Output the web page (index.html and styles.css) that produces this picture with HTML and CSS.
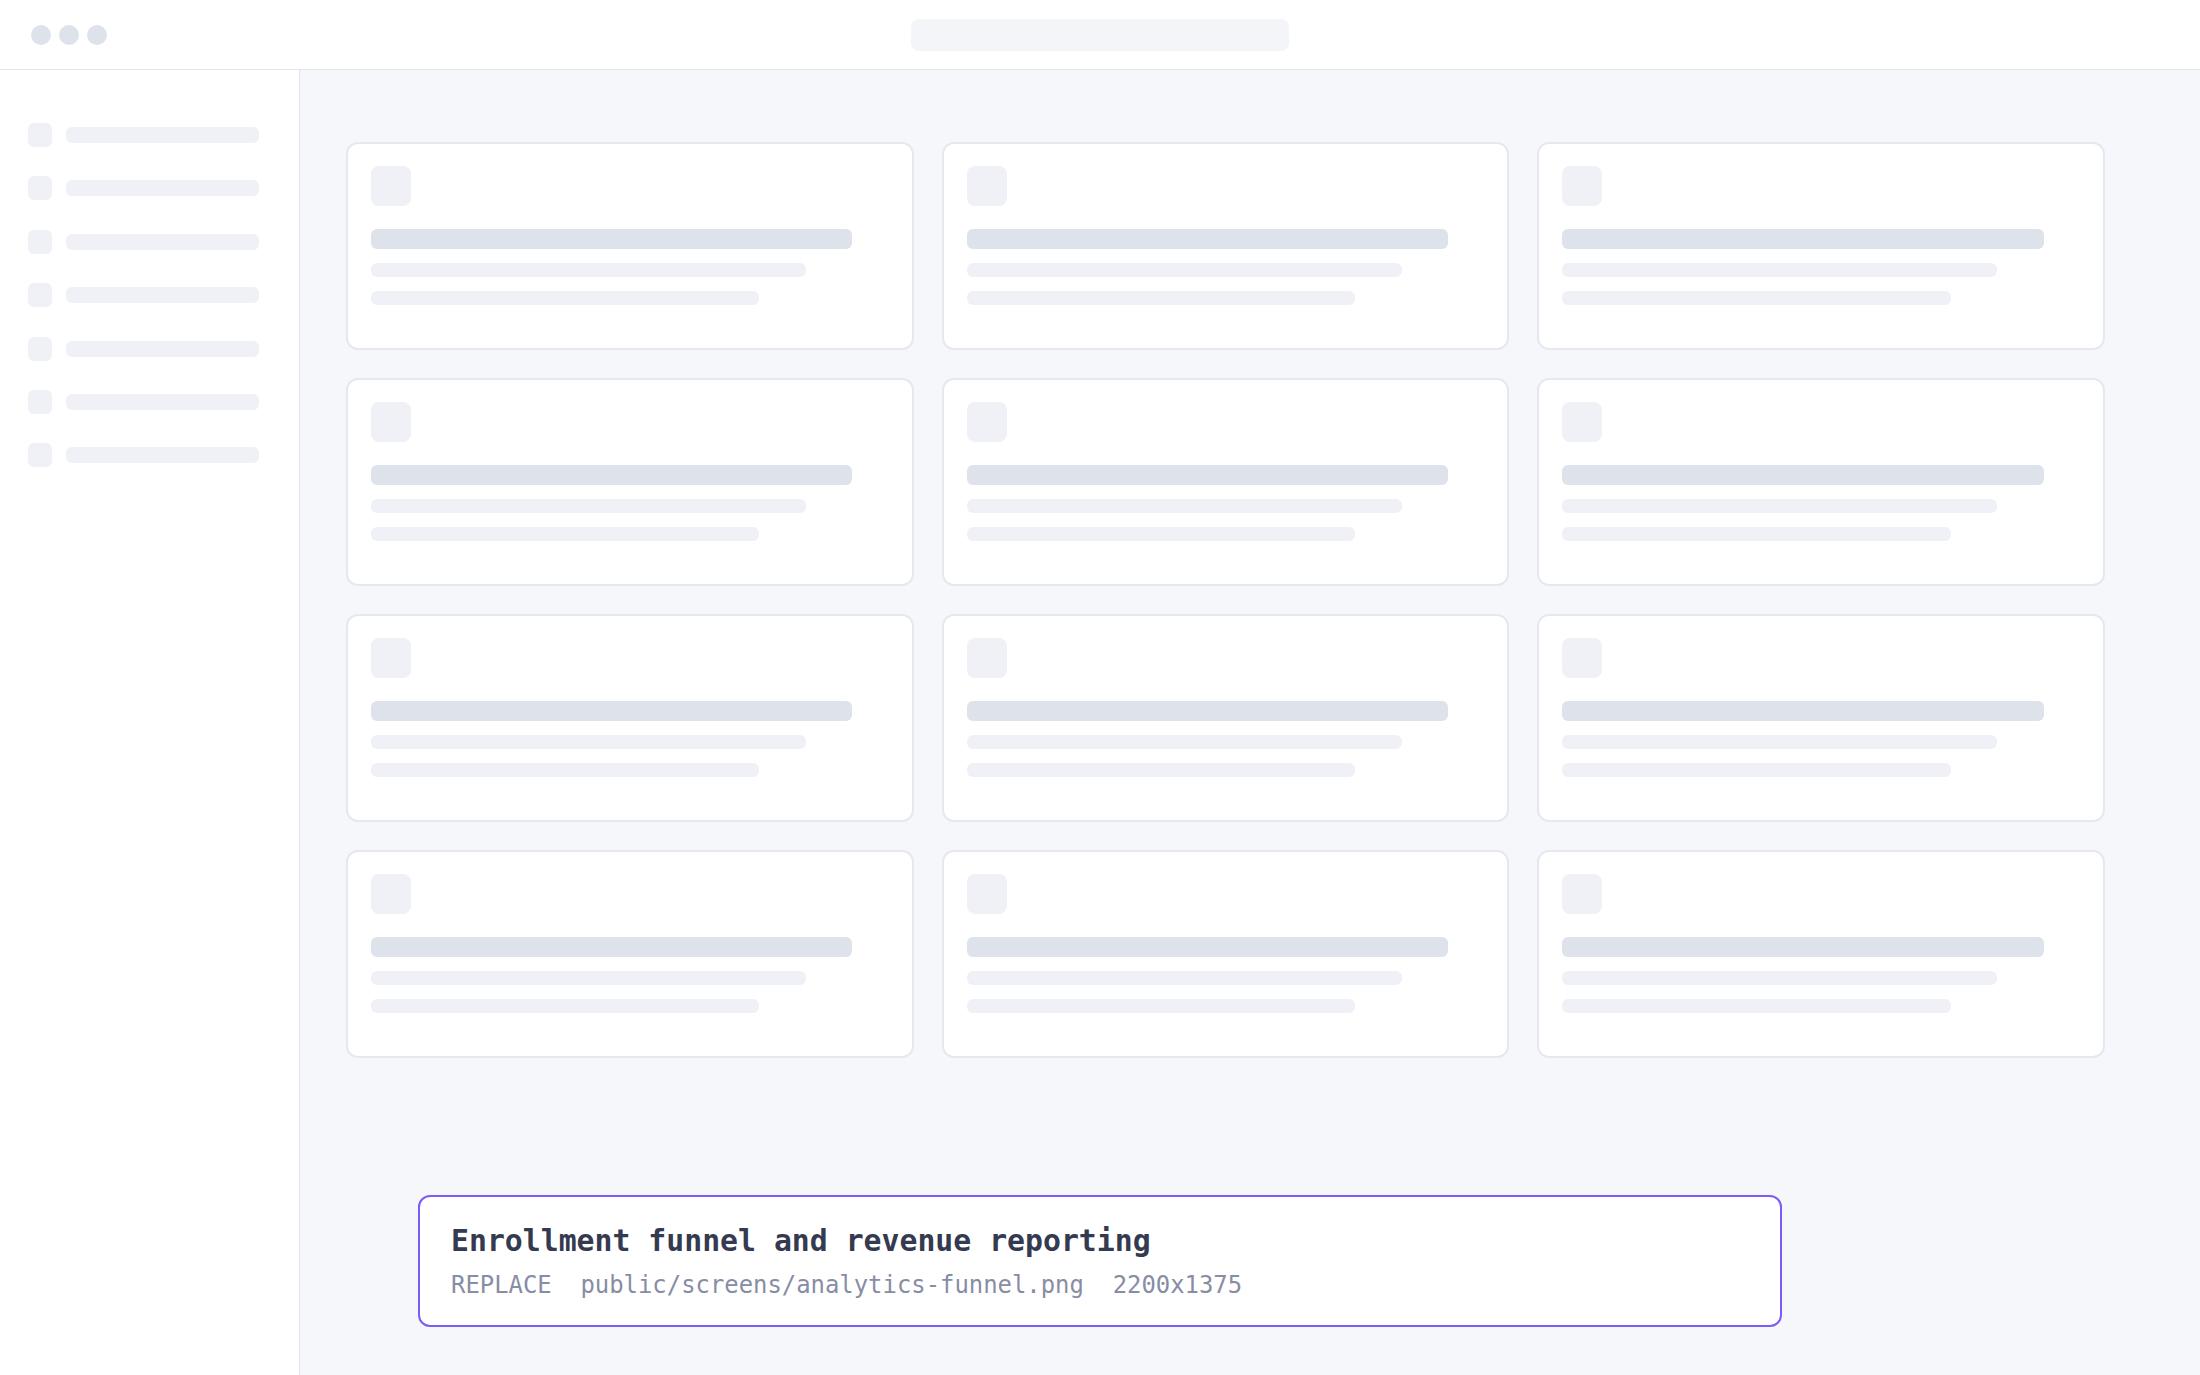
FILE: index.html
```html
<!DOCTYPE html>
<html lang="en">
<head>
    <meta charset="UTF-8">
    <meta name="viewport" content="width=device-width, initial-scale=1.0">
    <title>Enrollment funnel and revenue reporting</title>
    <link rel="stylesheet" href="styles.css">
</head>
<body>
    <div class="topbar">
        <div class="dots">
            <span class="dot"></span>
            <span class="dot"></span>
            <span class="dot"></span>
        </div>
        <div class="urlbar"></div>
        <div></div>
    </div>
    <div class="layout">
        <div class="sidebar">
            <div class="nav-item"><span class="nav-icon"></span><span class="nav-line"></span></div>
            <div class="nav-item"><span class="nav-icon"></span><span class="nav-line"></span></div>
            <div class="nav-item"><span class="nav-icon"></span><span class="nav-line"></span></div>
            <div class="nav-item"><span class="nav-icon"></span><span class="nav-line"></span></div>
            <div class="nav-item"><span class="nav-icon"></span><span class="nav-line"></span></div>
            <div class="nav-item"><span class="nav-icon"></span><span class="nav-line"></span></div>
            <div class="nav-item"><span class="nav-icon"></span><span class="nav-line"></span></div>
        </div>
        <div class="main">
            <div class="grid">
                <div class="card"><div class="card-icon"></div><div class="bar title"></div><div class="bar line1"></div><div class="bar line2"></div></div>
                <div class="card"><div class="card-icon"></div><div class="bar title"></div><div class="bar line1"></div><div class="bar line2"></div></div>
                <div class="card"><div class="card-icon"></div><div class="bar title"></div><div class="bar line1"></div><div class="bar line2"></div></div>
                <div class="card"><div class="card-icon"></div><div class="bar title"></div><div class="bar line1"></div><div class="bar line2"></div></div>
                <div class="card"><div class="card-icon"></div><div class="bar title"></div><div class="bar line1"></div><div class="bar line2"></div></div>
                <div class="card"><div class="card-icon"></div><div class="bar title"></div><div class="bar line1"></div><div class="bar line2"></div></div>
                <div class="card"><div class="card-icon"></div><div class="bar title"></div><div class="bar line1"></div><div class="bar line2"></div></div>
                <div class="card"><div class="card-icon"></div><div class="bar title"></div><div class="bar line1"></div><div class="bar line2"></div></div>
                <div class="card"><div class="card-icon"></div><div class="bar title"></div><div class="bar line1"></div><div class="bar line2"></div></div>
                <div class="card"><div class="card-icon"></div><div class="bar title"></div><div class="bar line1"></div><div class="bar line2"></div></div>
                <div class="card"><div class="card-icon"></div><div class="bar title"></div><div class="bar line1"></div><div class="bar line2"></div></div>
                <div class="card"><div class="card-icon"></div><div class="bar title"></div><div class="bar line1"></div><div class="bar line2"></div></div>
            </div>
        </div>
    </div>

    <div class="caption">
        <h1 class="caption-title">Enrollment funnel and revenue reporting</h1>
        <p class="caption-meta">
            <span>REPLACE</span>
            <span>public/screens/analytics-funnel.png</span>
            <span>2200x1375</span>
        </p>
    </div>
</body>
</html>
```

FILE: styles.css
```css
*{
    margin: 0;
    padding: 0;
    box-sizing: border-box;
}
body{
    font-family: "DejaVu Sans Mono", "Liberation Mono", monospace;
    background: #f6f7fb;
    width: 2200px;
    height: 1375px;
    overflow: hidden;
}
.topbar{
    height: 70px;
    background: #fff;
    border-bottom: 1px solid #e1e4ec;
    display: grid;
    grid-template-columns: 1fr auto 1fr;
    align-items: center;
}
.dots{
    display: flex;
    gap: 8px;
    padding-left: 31px;
}
.dot{
    width: 20px;
    height: 20px;
    border-radius: 50%;
    background: #dee2ea;
}
.urlbar{
    width: 378px;
    height: 32px;
    border-radius: 8px;
    background: #f4f5f9;
}
.layout{
    display: flex;
    height: 1305px;
}
.sidebar{
    width: 300px;
    background: #fff;
    border-right: 1px solid #e1e4ec;
    padding: 53px 0 0 28px;
    display: flex;
    flex-direction: column;
    gap: 29.4px;
}
.nav-item{
    display: flex;
    align-items: center;
    height: 24px;
}
.nav-icon{
    width: 24px;
    height: 24px;
    border-radius: 6px;
    background: #eff1f6;
}
.nav-line{
    width: 193px;
    height: 16px;
    margin-left: 14px;
    border-radius: 6px;
    background: #eff1f6;
}
.main{
    flex: 1;
    padding: 71.5px 95px 0 46px;
}
.grid{
    display: grid;
    grid-template-columns: repeat(3, 1fr);
    grid-auto-rows: 208px;
    gap: 28px;
}
.card{
    background: #fff;
    border: 2px solid #e5e8f0;
    border-radius: 12px;
    padding: 22.5px 23px 24px;
}
.card-icon{
    width: 40px;
    height: 40px;
    border-radius: 8px;
    background: #eff1f6;
    margin-bottom: 23px;
}
.bar{
    border-radius: 6px;
    background: #eff1f6;
}
.bar.title{
    width: 93%;
    height: 20px;
    background: #dee2ea;
    margin-bottom: 14px;
}
.bar.line1{
    width: 84%;
    height: 14px;
    margin-bottom: 14px;
}
.bar.line2{
    width: 75%;
    height: 14px;
}
.caption{
    position: fixed;
    left: 418px;
    right: 418px;
    bottom: 48px;
    background: #fff;
    border: 2px solid #7b5cf6;
    border-radius: 12px;
    padding: 26px 31px 25px;
}
.caption-title{
    font-size: 29.8px;
    line-height: 36px;
    font-weight: bold;
    color: #343a4f;
    margin-bottom: 12px;
}
.caption-meta{
    display: flex;
    gap: 2ch;
    font-size: 23.9px;
    line-height: 29px;
    color: #878da4;
}
```
